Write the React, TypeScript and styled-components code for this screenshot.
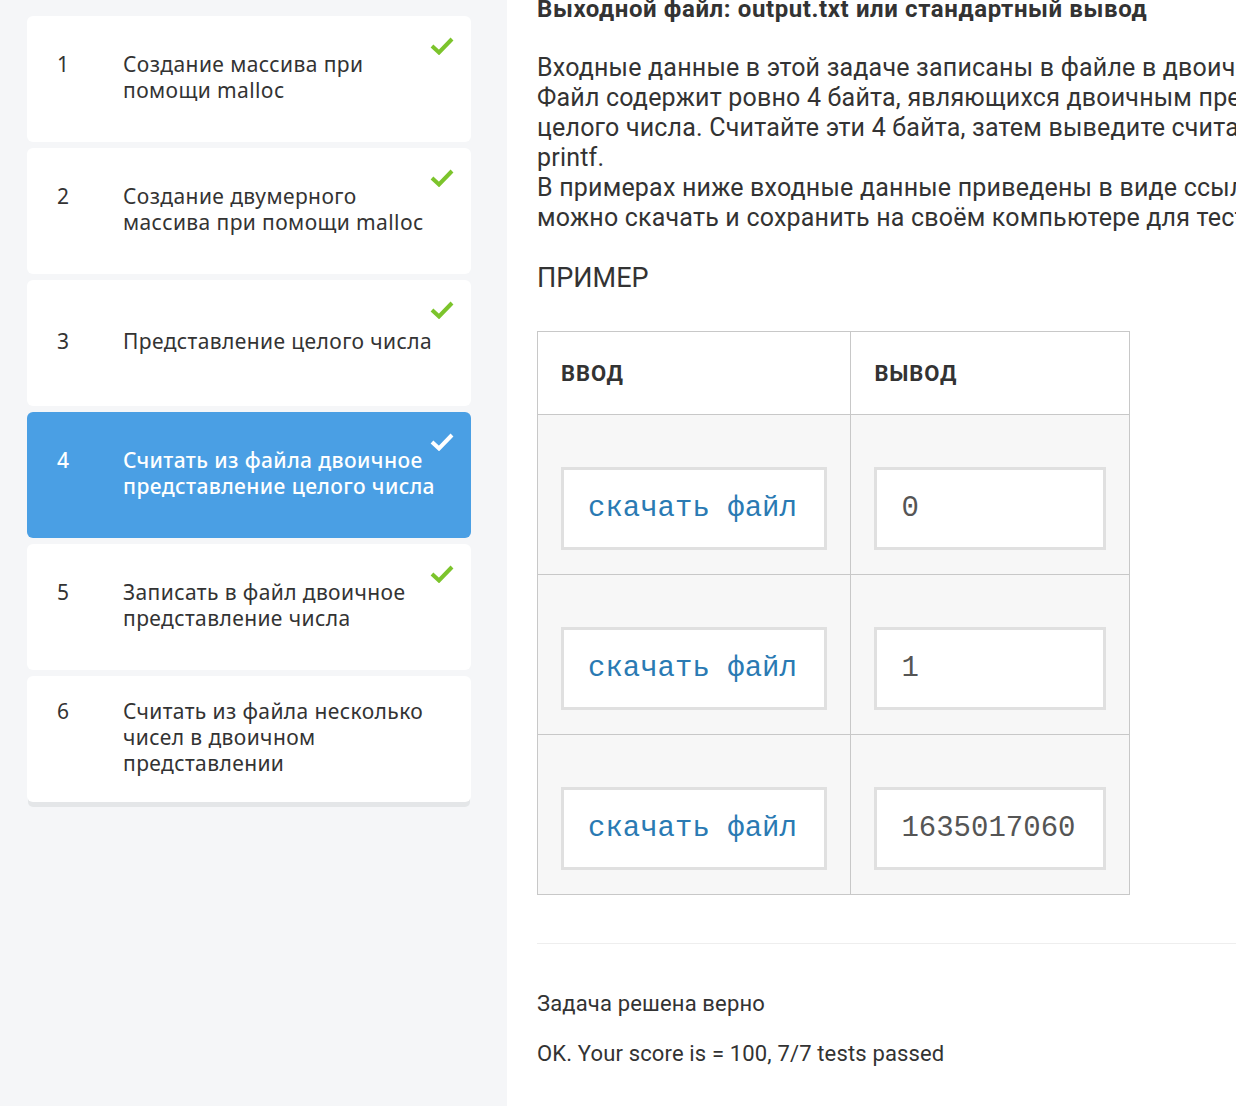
import React from "react";
import styled, { createGlobalStyle } from "styled-components";

interface Task {
  num: number;
  title: string;
  done: boolean;
  active?: boolean;
}

interface Sample {
  output: string;
}

const tasks: Task[] = [
  { num: 1, title: "Создание массива при помощи malloc", done: true },
  { num: 2, title: "Создание двумерного массива при помощи malloc", done: true },
  { num: 3, title: "Представление целого числа", done: true },
  { num: 4, title: "Считать из файла двоичное представление целого числа", done: true, active: true },
  { num: 5, title: "Записать в файл двоичное представление числа", done: true },
  { num: 6, title: "Считать из файла несколько чисел в двоичном представлении", done: false },
];

const samples: Sample[] = [{ output: "0" }, { output: "1" }, { output: "1635017060" }];

const GlobalStyle = createGlobalStyle`
  html, body {
    margin: 0;
    padding: 0;
    overflow: hidden;
    background: #ffffff;
  }
`;

const Page = styled.div`
  display: flex;
  width: 1236px;
  height: 1106px;
  overflow: hidden;
`;

const Sidebar = styled.aside`
  flex: 0 0 507px;
  width: 507px;
  min-width: 0;
  background: #f5f6f8;
  padding: 16px 36px 0 27px;
  box-sizing: border-box;
`;

const TaskList = styled.ul`
  list-style: none;
  margin: 0;
  padding: 0;
  display: flex;
  flex-direction: column;
  gap: 6px;
`;

const TaskCard = styled.li<{ $active?: boolean; $last?: boolean }>`
  position: relative;
  display: flex;
  align-items: center;
  height: 126px;
  box-sizing: border-box;
  padding: 0 28px 0 30px;
  border-radius: 6px;
  background: ${(p) => (p.$active ? "#4a9fe4" : "#ffffff")};
  color: ${(p) => (p.$active ? "#ffffff" : "#333333")};
  font-family: "Noto Sans", "Open Sans", sans-serif;
  font-size: 21px;
  line-height: 26px;
  letter-spacing: 0.4px;
  font-weight: ${(p) => (p.$active ? 500 : 400)};
  box-shadow: ${(p) => (p.$last ? "0 6px 0 -1px #e4e6e8" : "none")};
`;

const TaskRow = styled.div`
  display: flex;
  align-items: flex-start;
  margin-top: -4px;
`;

const TaskNum = styled.span`
  flex: 0 0 66px;
`;

const TaskTitle = styled.span`
  flex: 0 1 318px;
`;

const Check = styled.svg`
  position: absolute;
  top: 20px;
  right: 17px;
  width: 24px;
  height: 19px;
`;

const Content = styled.main`
  flex: 1 1 auto;
  min-width: 0;
  padding: 0 0 0 30px;
  box-sizing: border-box;
  font-family: Roboto, "Noto Sans", sans-serif;
  color: #333333;
`;

const Heading = styled.h3`
  margin: -6px 0 0 0;
  font-size: 24px;
  line-height: 30px;
  font-weight: 700;
  letter-spacing: 0.6px;
  white-space: nowrap;
`;

const Statement = styled.p`
  margin: 29px 0 0 0;
  font-size: 25px;
  line-height: 30px;
  letter-spacing: 0.2px;
  white-space: nowrap;
`;

const SectionTitle = styled.h4`
  margin: 28px 0 0 0;
  font-size: 27px;
  line-height: 34px;
  font-weight: 400;
  text-transform: uppercase;
`;

const SampleTable = styled.table`
  margin-top: 36px;
  border-collapse: collapse;
  width: 593px;
`;

const HeadCell = styled.th<{ $w: number }>`
  width: ${(p) => p.$w}px;
  height: 82px;
  padding: 0 23px;
  border: 1px solid #c8c8c8;
  background: #ffffff;
  text-align: left;
  font-size: 22px;
  font-weight: 700;
  text-transform: uppercase;
  letter-spacing: 0.9px;
  color: #333333;
`;

const BodyCell = styled.td`
  height: 160px;
  padding: 52px 23px 0 23px;
  box-sizing: border-box;
  border: 1px solid #c8c8c8;
  background: #f7f7f7;
  vertical-align: top;
`;

const CodeBox = styled.div<{ $link?: boolean }>`
  display: flex;
  align-items: center;
  height: 83px;
  box-sizing: border-box;
  padding: 0 24px;
  border: 3px solid #e0e0e0;
  background: #ffffff;
  font-family: "Liberation Mono", "Courier New", monospace;
  font-size: 29px;
  color: ${(p) => (p.$link ? "#2a7ab3" : "#555555")};
  white-space: nowrap;
`;

const Divider = styled.hr`
  margin: 48px 0 0 0;
  border: none;
  border-top: 1px solid #eeeeee;
`;

const Verdict = styled.p<{ $gap: number }>`
  margin: ${(p) => p.$gap}px 0 0 0;
  font-size: 22px;
  line-height: 30px;
  letter-spacing: 0.15px;
`;

const CheckIcon: React.FC<{ color: string }> = ({ color }) => (
  <Check viewBox="0 0 24 19">
    <path d="M2 10 L9 16.5 L22 3" fill="none" stroke={color} strokeWidth="4" />
  </Check>
);

const App: React.FC = () => {
  return (
    <Page>
      <GlobalStyle />
      <Sidebar>
        <TaskList>
          {tasks.map((t, i) => (
            <TaskCard key={t.num} $active={t.active} $last={i === tasks.length - 1}>
              <TaskRow>
                <TaskNum>{t.num}</TaskNum>
                <TaskTitle>{t.title}</TaskTitle>
              </TaskRow>
              {t.done && <CheckIcon color={t.active ? "#ffffff" : "#7cc42c"} />}
            </TaskCard>
          ))}
        </TaskList>
      </Sidebar>
      <Content>
        <Heading>Выходной файл: output.txt или стандартный вывод</Heading>
        <Statement>
          Входные данные в этой задаче записаны в файле в двоичном виде.
          <br />
          Файл содержит ровно 4 байта, являющихся двоичным представлением
          <br />
          целого числа. Считайте эти 4 байта, затем выведите считанное число при помощи
          <br />
          printf.
          <br />
          В примерах ниже входные данные приведены в виде ссылок на файлы, которые
          <br />
          можно скачать и сохранить на своём компьютере для тестирования.
        </Statement>
        <SectionTitle>Пример</SectionTitle>
        <SampleTable>
          <thead>
            <tr>
              <HeadCell $w={314}>ввод</HeadCell>
              <HeadCell $w={279}>вывод</HeadCell>
            </tr>
          </thead>
          <tbody>
            {samples.map((s, i) => (
              <tr key={i}>
                <BodyCell>
                  <CodeBox $link>скачать файл</CodeBox>
                </BodyCell>
                <BodyCell>
                  <CodeBox>{s.output}</CodeBox>
                </BodyCell>
              </tr>
            ))}
          </tbody>
        </SampleTable>
        <Divider />
        <Verdict $gap={45}>Задача решена верно</Verdict>
        <Verdict $gap={20}>OK. Your score is = 100, 7/7 tests passed</Verdict>
      </Content>
    </Page>
  );
};

export default App;
